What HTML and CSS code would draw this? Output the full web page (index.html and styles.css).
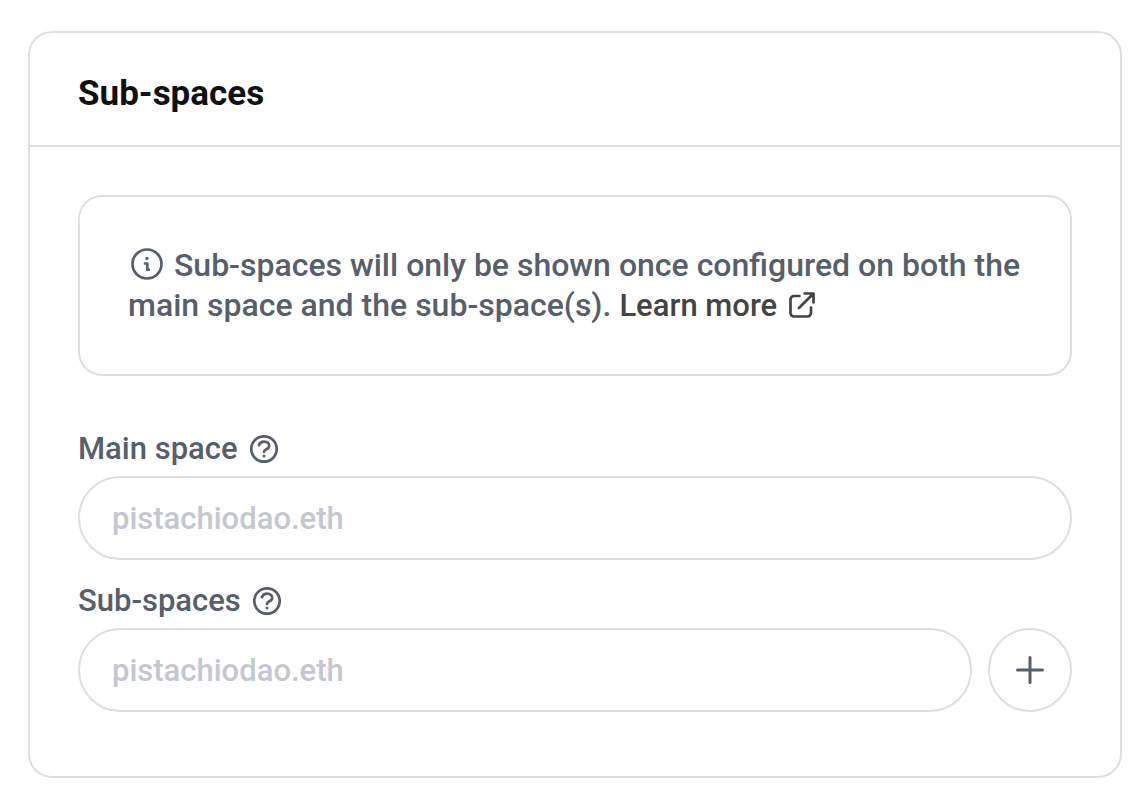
FILE: index.html
```html
<!DOCTYPE html>
<html lang="en">
<head>
<meta charset="utf-8">
<meta name="viewport" content="width=device-width, initial-scale=1">
<title>Sub-spaces</title>
<link rel="stylesheet" href="styles.css">
</head>
<body>
<section class="card">
  <header class="card-header"><h1 class="card-title">Sub-spaces</h1></header>
  <form class="card-body">
    <p class="notice">
      <svg class="info-icon" viewBox="0 0 32 32" aria-hidden="true"><circle cx="16" cy="16" r="14.5"/><path d="M14 15.500h2.300v6.200m0 0h1.500"/><circle class="dot" cx="15.900" cy="10.400" r="1.700"/></svg>
      Sub-spaces will only be shown once configured on both the main space and the sub-space(s).
      <a class="learn-more" href="#learn-more">Learn more<svg class="external-icon" viewBox="0 0 26 26" aria-hidden="true"><path d="M10.500 4H5A3.500 3.500 0 0 0 1.500 7.500V21A3.500 3.500 0 0 0 5 24.500H18.500A3.500 3.500 0 0 0 22 21V15.500M15.500 1.500H24.500V10.500M24.200 1.800L10 16"/></svg></a>
    </p>
    <div class="field">
      <div class="label-row">
        <label for="main-space">Main space</label>
        <svg class="help-icon" viewBox="0 0 28 28" aria-hidden="true"><circle cx="14" cy="14" r="12.700"/><path d="M8.900 10.200Q10.200 6.700 14.100 6.700C17.200 6.700 19.200 8.500 19.200 10.900C19.200 14.600 14 14 14 17"/><circle class="dot" cx="14" cy="21" r="1.500"/></svg>
      </div>
      <input class="text-input" id="main-space" type="text" placeholder="pistachiodao.eth">
    </div>
    <div class="field">
      <div class="label-row">
        <label for="sub-space">Sub-spaces</label>
        <svg class="help-icon" viewBox="0 0 28 28" aria-hidden="true"><circle cx="14" cy="14" r="12.700"/><path d="M8.900 10.200Q10.200 6.700 14.100 6.700C17.200 6.700 19.200 8.500 19.200 10.900C19.200 14.600 14 14 14 17"/><circle class="dot" cx="14" cy="21" r="1.500"/></svg>
      </div>
      <div class="input-row">
        <input class="text-input" id="sub-space" type="text" placeholder="pistachiodao.eth">
        <button class="add-button" type="button" aria-label="Add sub-space"><svg class="plus-icon" viewBox="0 0 28 28" aria-hidden="true"><path d="M14 1.500V26.500M1.500 14H26.500"/></svg></button>
      </div>
    </div>
  </form>
</section>
</body>
</html>
```

FILE: styles.css
```css
* {
  box-sizing: border-box;
}

body {
  margin: 0;
  padding: 31px 24px 28px 28px;
  background: #fff;
  color: #57606a;
  font: 500 31px/40px Roboto, "Liberation Sans", sans-serif;
}

.card {
  border: 2px solid #dfdfdf;
  border-radius: 24px;
}

.card-header {
  padding: 41px 48px 31px;
  border-bottom: 2px solid #dfdfdf;
}

.card-title {
  margin: 0;
  color: #111;
  font-size: 35px;
  font-weight: 700;
  line-height: 40px;
}

.card-body {
  padding: 48px 48px 64px;
}

.notice {
  margin: 0 0 53px;
  padding: 48px 40px 48px 48px;
  border: 2px solid #dfdfdf;
  border-radius: 24px;
  font-size: 32px;
}

.learn-more {
  color: #444;
  font-size: 31px;
  text-decoration: none;
  white-space: nowrap;
}

svg {
  fill: none;
  stroke: currentColor;
  stroke-width: 2.7;
  stroke-linecap: round;
  stroke-linejoin: round;
}

.dot {
  fill: currentColor;
  stroke: none;
}

.info-icon {
  width: 32px;
  height: 32px;
  margin: 0 3px;
  vertical-align: -4px;
}

.external-icon {
  width: 26px;
  height: 26px;
  margin-left: 12px;
  vertical-align: -2px;
}

.field + .field {
  margin-top: 21px;
}

.label-row {
  display: flex;
  align-items: center;
  gap: 12px;
  margin-bottom: 7px;
}

.help-icon {
  width: 28px;
  height: 28px;
}

.input-row {
  display: flex;
  gap: 16px;
}

.text-input {
  display: block;
  width: 100%;
  min-width: 0;
  height: 84px;
  padding: 0 32px;
  border: 2px solid #dfdfdf;
  border-radius: 42px;
  background: #fff;
  color: #57606a;
  font: inherit;
}

.text-input::placeholder {
  color: #c4c7d0;
  opacity: 1;
}

.add-button {
  display: flex;
  flex: none;
  align-items: center;
  justify-content: center;
  width: 84px;
  height: 84px;
  padding: 0;
  border: 2px solid #dfdfdf;
  border-radius: 50%;
  background: #fff;
  color: #57606a;
}

.plus-icon {
  width: 28px;
  height: 28px;
  stroke-width: 3;
}
```
